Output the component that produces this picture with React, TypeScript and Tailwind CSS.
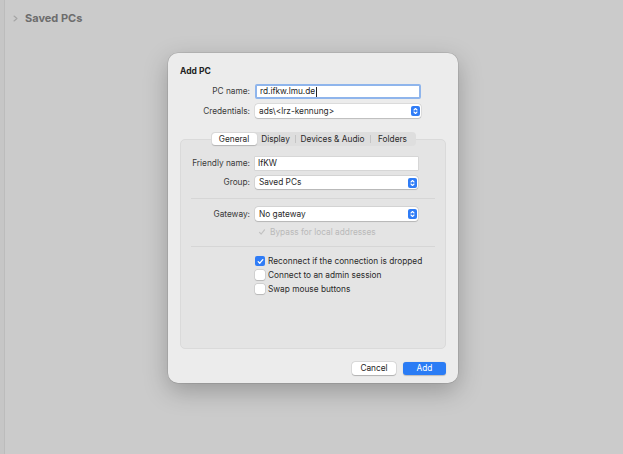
import React from 'react';

const font = { fontFamily: 'Inter, "Liberation Sans", sans-serif' };

function Stepper() {
  return (
    <span className="flex h-[10px] w-[9px] items-center justify-center rounded-[2px] bg-[#2f7cf6]">
      <svg width="5" height="8" viewBox="0 0 5 8" fill="none" stroke="white" strokeWidth="1.1" strokeLinecap="round" strokeLinejoin="round">
        <path d="M1 3 L2.5 1.5 L4 3" />
        <path d="M1 5 L2.5 6.5 L4 5" />
      </svg>
    </span>
  );
}

function Select({ value, className }: { value: string; className: string }) {
  return (
    <div className={`flex items-center justify-between rounded-[3px] bg-white pl-[4px] pr-[1px] shadow-[0_0_0_0.5px_rgba(0,0,0,0.12),0_0.5px_1px_rgba(0,0,0,0.15)] ${className}`}>
      <span className="whitespace-nowrap text-[8.3px] text-[#2a2a2a]">{value}</span>
      <Stepper />
    </div>
  );
}

function Check({ checked }: { checked?: boolean }) {
  return checked ? (
    <span className="flex h-[10px] w-[10px] shrink-0 items-center justify-center rounded-[2px] bg-[#2f7cf6]">
      <svg width="7" height="7" viewBox="0 0 7 7" fill="none" stroke="white" strokeWidth="1.3" strokeLinecap="round" strokeLinejoin="round">
        <path d="M1.2 3.6 L2.8 5.2 L5.8 1.6" />
      </svg>
    </span>
  ) : (
    <span className="h-[10px] w-[10px] shrink-0 rounded-[2px] bg-white shadow-[0_0_0_0.5px_rgba(0,0,0,0.15),0_0.5px_1px_rgba(0,0,0,0.12)]" />
  );
}

function Row({ label, children, labelW }: { label: string; children: React.ReactNode; labelW: string }) {
  return (
    <div className="flex items-center">
      <span className={`${labelW} shrink-0 whitespace-nowrap pr-[5px] text-right text-[8.3px] text-[#3a3a3a]`}>{label}</span>
      {children}
    </div>
  );
}

export default function App() {
  return (
    <div className="relative flex h-[454px] w-[623px] overflow-hidden bg-[#cbcbcb]" style={font}>
      <div className="w-[5px] shrink-0 border-r border-[#bcbcbc] bg-[#c6c6c6]" />
      <div className="mt-[11px] flex h-[14px] items-center gap-[7px] pl-[8px]">
        <svg width="5" height="7" viewBox="0 0 5 7" fill="none" stroke="#a5a5a5" strokeWidth="1.1" strokeLinecap="round" strokeLinejoin="round">
          <path d="M1 1 L4 3.5 L1 6" />
        </svg>
        <span className="text-[11px] font-bold text-[#6d6d6d]">Saved PCs</span>
      </div>

      <div className="absolute left-[168px] top-[53px] flex h-[330px] w-[290px] flex-col rounded-[10px] bg-[#ececec] px-[12px] shadow-[0_0_0_0.5px_rgba(0,0,0,0.15),0_8px_24px_rgba(0,0,0,0.25)]">
        <div className="mt-[12px] flex h-[12px] items-center text-[8.5px] font-bold text-[#222]">Add PC</div>

        <div className="mt-[7px]">
          <Row label="PC name:" labelW="w-[75px]">
            <div className="flex h-[15px] w-[166px] items-center rounded-[2px] border-[2px] border-[#8fb5ec] bg-white pl-[3px] text-[8.3px] text-[#222]">
              rd.ifkw.lmu.de<span className="ml-[1px] h-[10px] w-[1px] bg-[#222]" />
            </div>
          </Row>
        </div>
        <div className="mt-[5px]">
          <Row label="Credentials:" labelW="w-[75px]">
            <Select value="ads\<lrz-kennung>" className="h-[14px] w-[166px]" />
          </Row>
        </div>

        <div className="relative z-10 mt-[14px] flex justify-center">
          <div className="flex h-[14px] items-center rounded-[4px] bg-[#dedede] p-[1px] text-[8.3px] text-[#2a2a2a]">
            <span className="flex h-full w-[45px] items-center justify-center rounded-[3px] bg-white shadow-[0_0.5px_1px_rgba(0,0,0,0.2)]">General</span>
            <span className="flex h-full w-[38px] items-center justify-center">Display</span>
            <span className="h-[8px] w-px bg-[#c4c4c4]" />
            <span className="flex h-full w-[74px] items-center justify-center whitespace-nowrap">Devices &amp; Audio</span>
            <span className="h-[8px] w-px bg-[#c4c4c4]" />
            <span className="flex h-full w-[44px] items-center justify-center">Folders</span>
          </div>
        </div>

        <div className="-mt-[7px] flex h-[210px] flex-col rounded-[5px] border border-[#dadada] bg-[#e4e4e4] px-[10px]">
          <div className="mt-[17px]">
            <Row label="Friendly name:" labelW="w-[64px]">
              <div className="flex h-[13px] w-[163px] items-center bg-white pl-[3px] text-[8.3px] text-[#222] shadow-[0_0_0_0.5px_rgba(0,0,0,0.12)]">IfKW</div>
            </Row>
          </div>
          <div className="mt-[6px]">
            <Row label="Group:" labelW="w-[64px]">
              <Select value="Saved PCs" className="h-[13px] w-[163px]" />
            </Row>
          </div>
          <div className="mt-[9px] h-px bg-[#d6d6d6]" />
          <div className="mt-[8px]">
            <Row label="Gateway:" labelW="w-[64px]">
              <Select value="No gateway" className="h-[14px] w-[163px]" />
            </Row>
          </div>
          <div className="mt-[5px] flex h-[12px] items-center gap-[4px] whitespace-nowrap pl-[67px] text-[8.3px] text-[#b9b9b9]">
            <svg width="8" height="8" viewBox="0 0 8 8" fill="none" stroke="#c2c2c2" strokeWidth="1.2" strokeLinecap="round" strokeLinejoin="round">
              <path d="M1.5 4.3 L3.2 6 L6.5 1.8" />
            </svg>
            Bypass for local addresses
          </div>
          <div className="mt-[8px] h-px bg-[#d6d6d6]" />
          <div className="mt-[8px] flex flex-col gap-[2px] whitespace-nowrap pl-[64px] text-[8.3px] text-[#2a2a2a]">
            <div className="flex h-[12px] items-center gap-[3px]"><Check checked />Reconnect if the connection is dropped</div>
            <div className="flex h-[12px] items-center gap-[3px]"><Check />Connect to an admin session</div>
            <div className="flex h-[12px] items-center gap-[3px]"><Check />Swap mouse buttons</div>
          </div>
        </div>

        <div className="mt-[13px] flex justify-end gap-[7px] text-[8.3px]">
          <button className="flex h-[13px] w-[44px] items-center justify-center rounded-[3px] bg-white text-[#222] shadow-[0_0_0_0.5px_rgba(0,0,0,0.12),0_0.5px_1px_rgba(0,0,0,0.2)]">Cancel</button>
          <button className="flex h-[13px] w-[43px] items-center justify-center rounded-[3px] bg-[#2a7cf5] text-white shadow-[0_0.5px_1px_rgba(0,0,0,0.2)]">Add</button>
        </div>
      </div>
    </div>
  );
}
